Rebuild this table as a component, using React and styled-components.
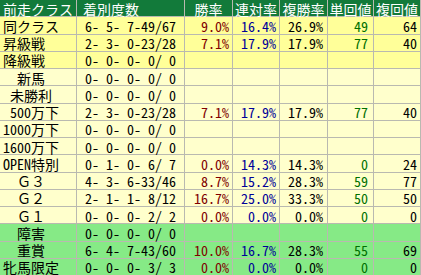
import React from "react";
import styled, { createGlobalStyle } from "styled-components";

const Global = createGlobalStyle`
  html, body { margin: 0; padding: 0; background: #ffffff; }
  body { font-family: "Noto Sans Mono CJK JP", "Noto Sans CJK JP", "Liberation Mono", monospace; }
`;

const Table = styled.div`
  display: grid;
  grid-template-columns: 76px 107px 47px 46px 47px 45px 46px;
  grid-auto-rows: minmax(0, 1fr);
  gap: 1px;
  width: 421px;
  height: 275px;
  padding-right: 1px;
  box-sizing: border-box;
  background: #b9b9b0;
  font-size: 14px;
  line-height: 14px;
`;

const HeadCell = styled.div`
  display: flex;
  align-items: center;
  justify-content: ${(p) => (p.$left ? "flex-start" : "center")};
  padding-left: ${(p) => (p.$left ? "6px" : "0")};
  padding-top: 1px;
  background: #127a3a;
  color: #ffffff;
  white-space: pre;
  min-height: 0;
`;

const rowBg = {
  yellow: "#ffff99",
  cream: "#ffffcc",
  green: "#86ea86",
};

const Cell = styled.div`
  display: flex;
  align-items: center;
  justify-content: ${(p) => (p.$align === "left" ? "flex-start" : "flex-end")};
  padding-left: ${(p) => p.$pl || 0}px;
  padding-right: ${(p) => p.$pr || 0}px;
  padding-top: 1px;
  background: ${(p) => rowBg[p.$tone]};
  color: ${(p) => p.$color || "#000000"};
  white-space: pre;
  min-height: 0;
`;

const headers = ["前走クラス", "着別度数", "勝率", "連対率", "複勝率", "単回値", "複回値"];

const rows = [
  ["同クラス", "6- 5- 7-49/67", "9.0%", "16.4%", "26.9%", "49", "64", "yellow"],
  ["昇級戦", "2- 3- 0-23/28", "7.1%", "17.9%", "17.9%", "77", "40", "yellow"],
  ["降級戦", "0- 0- 0- 0/ 0", "", "", "", "", "", "yellow"],
  ["　新馬", "0- 0- 0- 0/ 0", "", "", "", "", "", "cream"],
  [" 未勝利", "0- 0- 0- 0/ 0", "", "", "", "", "", "cream"],
  [" 500万下", "2- 3- 0-23/28", "7.1%", "17.9%", "17.9%", "77", "40", "cream"],
  ["1000万下", "0- 0- 0- 0/ 0", "", "", "", "", "", "cream"],
  ["1600万下", "0- 0- 0- 0/ 0", "", "", "", "", "", "cream"],
  ["OPEN特別", "0- 1- 0- 6/ 7", "0.0%", "14.3%", "14.3%", "0", "24", "cream"],
  ["　Ｇ３", "4- 3- 6-33/46", "8.7%", "15.2%", "28.3%", "59", "77", "cream"],
  ["　Ｇ２", "2- 1- 1- 8/12", "16.7%", "25.0%", "33.3%", "50", "50", "cream"],
  ["　Ｇ１", "0- 0- 0- 2/ 2", "0.0%", "0.0%", "0.0%", "0", "0", "cream"],
  ["　障害", "0- 0- 0- 0/ 0", "", "", "", "", "", "green"],
  ["　重賞", "6- 4- 7-43/60", "10.0%", "16.7%", "28.3%", "55", "69", "green"],
  ["牝馬限定", "0- 0- 0- 3/ 3", "0.0%", "0.0%", "0.0%", "0", "0", "green"],
];

const cols = [
  { align: "left", pl: 3 },
  { align: "left", pl: 8 },
  { pr: 3, color: "#800000" },
  { pr: 3, color: "#000099" },
  { pr: 4 },
  { pr: 5, color: "#007000" },
  { pr: 3 },
];

export default function App() {
  return (
    <>
      <Global />
      <Table>
        {headers.map((h, i) => (
          <HeadCell key={h} $left={i === 1}>
            {h}
          </HeadCell>
        ))}
        {rows.map((r) =>
          r.slice(0, 7).map((v, i) => (
            <Cell
              key={r[0] + i}
              $tone={r[7]}
              $align={cols[i].align}
              $pl={cols[i].pl}
              $pr={cols[i].pr}
              $color={cols[i].color}
            >
              {v}
            </Cell>
          ))
        )}
      </Table>
    </>
  );
}
